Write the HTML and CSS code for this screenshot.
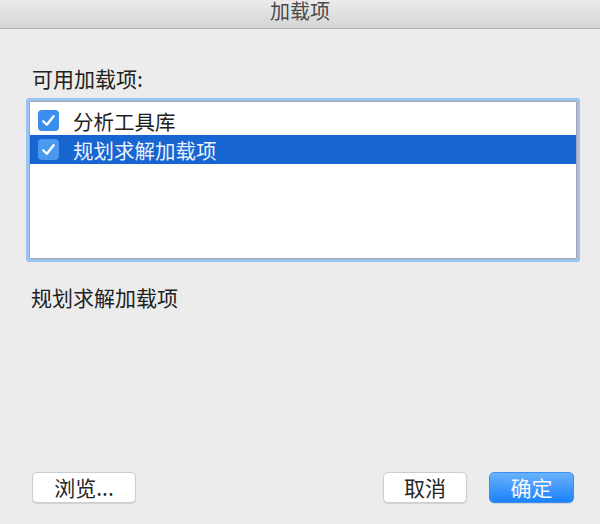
FILE: index.html
```html
<!DOCTYPE html>
<html lang="zh-CN">
<head>
    <meta charset="UTF-8">
    <title>加载项</title>
    <link rel="stylesheet" href="styles.css">
</head>
<body>

<div class="window">

    <!--title bar-->
    <div class="titlebar">加载项</div>

    <div class="content">
        <div class="label">可用加载项:</div>

        <!--add-in list-->
        <div class="list">
            <div class="row">
                <span class="check">
                    <svg viewBox="0 0 21 21" width="21" height="21"><path d="M5.2 11.2 L8.9 14.8 L15.6 6.2" fill="none" stroke="#fff" stroke-width="2.3" stroke-linecap="round" stroke-linejoin="round"/></svg>
                </span>
                <span class="name">分析工具库</span>
            </div>
            <div class="row selected">
                <span class="check">
                    <svg viewBox="0 0 21 21" width="21" height="21"><path d="M5.2 11.2 L8.9 14.8 L15.6 6.2" fill="none" stroke="#fff" stroke-width="2.3" stroke-linecap="round" stroke-linejoin="round"/></svg>
                </span>
                <span class="name">规划求解加载项</span>
            </div>
        </div>

        <div class="description">规划求解加载项</div>
    </div>

    <!--buttons-->
    <div class="footer">
        <button class="btn browse">浏览...</button>
        <div class="spacer"></div>
        <button class="btn cancel">取消</button>
        <button class="btn primary">确定</button>
    </div>
</div>

</body>
</html>
```

FILE: styles.css
```css
body, html {
    margin: 0;
    padding: 0;
    width: 100%;
    height: 100%;
    background: #ececec;
    font-family: "Noto Sans CJK SC", "Noto Sans", sans-serif;
    color: #222;
}

.window {
    display: flex;
    flex-direction: column;
    height: 524px;
}

.titlebar {
    height: 28px;
    line-height: 22px;
    font-size: 20px;
    text-align: center;
    color: #4a4a4a;
    background: linear-gradient(#ebebeb, #d5d5d5);
    border-bottom: 1px solid #b3b3b3;
}

.content {
    display: flex;
    flex-direction: column;
    padding: 0 23px 0 29px;
}

.label {
    margin: 37px 0 0 3px;
    font-size: 21px;
    line-height: 24px;
}

.list {
    margin-top: 11px;
    height: 156px;
    padding-top: 4px;
    box-sizing: border-box;
    height: 158px;
    background: #fff;
    border: 1px solid #a6a6a6;
    box-shadow: 0 0 0 3px #9dc3f0;
    border-radius: 1px;
}

.row {
    display: flex;
    align-items: center;
    height: 29px;
    font-size: 20.5px;
    color: #1e1e1e;
}

.row.selected {
    background: #1765d1;
    color: #e8f0fb;
}

.check {
    display: flex;
    width: 21px;
    height: 21px;
    margin: 0 14px 0 8px;
    border-radius: 4px;
    background: #3b8df0;
}

.row.selected .check {
    background: #4b98ef;
}

.description {
    margin: 26px 0 0 2px;
    font-size: 21px;
    line-height: 24px;
}

.footer {
    display: flex;
    align-items: center;
    margin-top: auto;
    padding: 0 26px 21px 32px;
}

.spacer {
    flex: 1;
}

.btn {
    height: 31px;
    padding: 0;
    font-family: "Noto Sans CJK SC", sans-serif;
    font-size: 21px;
    line-height: 29px;
    color: #262626;
    background: #fff;
    border: 1px solid #cdcdcd;
    border-radius: 5px;
    box-shadow: 0 1px 1px rgba(0,0,0,0.12);
}

.browse {
    width: 104px;
}

.cancel {
    width: 84px;
}

.primary {
    width: 85px;
    margin-left: 22px;
    color: #f2f7ff;
    background: linear-gradient(#69b1fa, #1b82fb);
    border-color: #3a8ef5;
}
```
